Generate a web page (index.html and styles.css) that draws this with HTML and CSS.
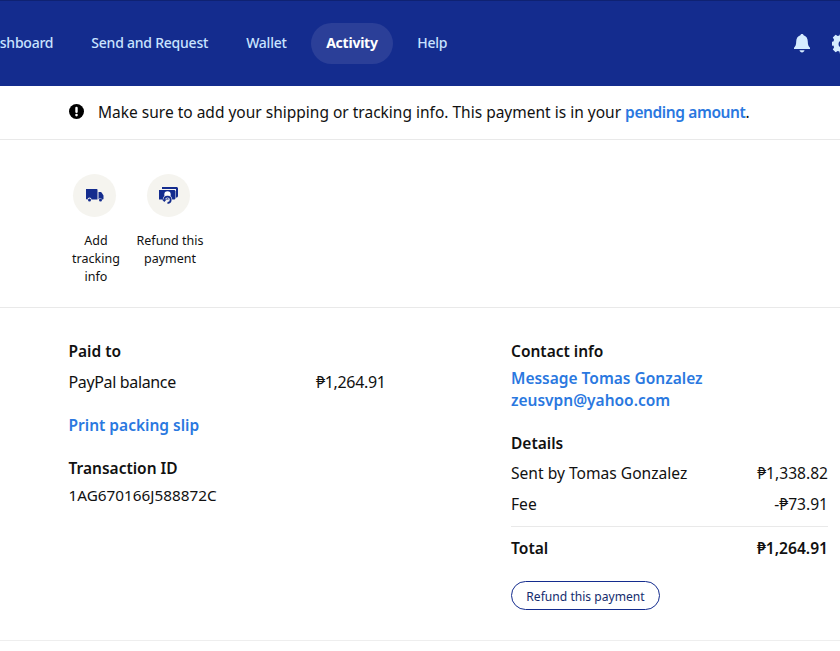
FILE: index.html
```html
<!DOCTYPE html>
<html lang="en">
<head>
    <meta charset="UTF-8">
    <meta name="viewport" content="width=device-width, initial-scale=1.0">
    <title>Transaction details</title>
    <link rel="stylesheet" href="styles.css">
</head>
<body>
<header class="topbar">
    <nav class="nav-links">
        <a class="nav-link" href="#">Dashboard</a>
        <a class="nav-link" href="#">Send and Request</a>
        <a class="nav-link" href="#">Wallet</a>
        <a class="nav-link active" href="#">Activity</a>
        <a class="nav-link" href="#">Help</a>
    </nav>
    <div class="nav-icons">
        <svg class="bell" viewBox="0 0 16 19" width="16" height="19">
            <path fill="#d6ecff" d="M8 0c.8 0 1.400.5 1.600 1.200C12.400 2 13.800 4.500 13.800 7.500c0 3 .6 4.800 2.200 6.300v1.200H0v-1.200c1.600-1.500 2.200-3.300 2.200-6.300 0-3 1.400-5.500 4.200-6.300C6.600.5 7.200 0 8 0z"/>
            <path fill="#d6ecff" d="M5.500 16.300h5C10.200 17.600 9.200 18.400 8 18.400s-2.200-.8-2.500-2.100z"/>
        </svg>
        <svg class="gear" viewBox="0 0 20 20" width="20" height="20">
            <path fill="#d6ecff" fill-rule="evenodd" d="M8 0h4l.6 2.400 1.700.7 2.100-1.300 2.800 2.800-1.300 2.100.7 1.700 2.400.6v4l-2.400.6-.7 1.700 1.300 2.100-2.800 2.800-2.100-1.300-1.700.7L12 20H8l-.6-2.400-1.700-.7-2.100 1.300-2.800-2.800 1.300-2.100-.7-1.700L-1 12V8l2.400-.6.7-1.700L.8 3.600l2.800-2.800 2.100 1.300 1.700-.7zM10 6.500a3.500 3.500 0 1 0 0 7 3.500 3.500 0 0 0 0-7z"/>
        </svg>
    </div>
</header>

<section class="notice">
    <svg class="notice-icon" viewBox="0 0 16 16" width="15" height="15">
        <circle cx="8" cy="8" r="8" fill="#000"/>
        <rect x="6.700" y="3" width="2.600" height="6.600" rx="1.300" fill="#fff"/>
        <circle cx="8" cy="11.800" r="1.400" fill="#fff"/>
    </svg>
    <p>Make sure to add your shipping or tracking info. This payment is in your <a href="#">pending amount</a>.</p>
</section>

<section class="actions">
    <a class="action action-track" href="#">
        <span class="action-circle">
            <svg viewBox="0.5 0.500 18 14" width="18" height="14">
                <path fill="#142c8e" d="M0 1.500C0 .7.700 0 1.500 0h9C11.300 0 12 .7 12 1.500V11H6a2 2 0 0 0-4 0H1.500C.7 11 0 10.300 0 9.500z"/>
                <path fill="#142c8e" d="M13 3.500h2.200c.4 0 .7.200.9.500L18 7v3.200c0 .5-.3.8-.8.8h-.7a2 2 0 0 0-3.500-.3z"/>
                <circle cx="4" cy="11.500" r="1.500" fill="#142c8e"/>
                <circle cx="15" cy="11.500" r="1.500" fill="#142c8e"/>
            </svg>
        </span>
        <span class="action-label">Add tracking info</span>
    </a>
    <a class="action action-refund" href="#">
        <span class="action-circle">
            <svg viewBox="1 -1 20 19" width="20" height="19">
                <path fill="#142c8e" d="M4 0h14.500c.8 0 1.500.7 1.500 1.500V9c0 .8-.7 1.500-1.500 1.500H18V2H4z"/>
                <path fill="#142c8e" d="M1.500 3h14.500c.8 0 1.500.7 1.500 1.500V11c0 .8-.7 1.500-1.500 1.500H1.500C.7 12.500 0 11.800 0 11V4.500C0 3.700.7 3 1.500 3z"/>
                <circle cx="9.500" cy="7.500" r="3.200" fill="#fff"/>
                <path fill="none" stroke="#f5f4ef" stroke-width="3.500" d="M9.500 15.500a3 3 0 1 0-3-3"/>
                <path fill="none" stroke="#142c8e" stroke-width="1.800" d="M9.500 16a3.200 3.200 0 1 0-3.200-3.200"/>
                <path fill="#142c8e" d="M4 12.500h4.600l-2.300 2.600z"/>
            </svg>
        </span>
        <span class="action-label">Refund this payment</span>
    </a>
</section>

<section class="details">
    <div class="col-left">
        <h3>Paid to</h3>
        <div class="row row-paid">
            <span>PayPal balance</span>
            <span>₱1,264.91</span>
        </div>
        <a class="link print-link" href="#">Print packing slip</a>
        <h3 class="txn-title">Transaction ID</h3>
        <p class="txn-id">1AG670166J588872C</p>
    </div>
    <div class="col-right">
        <h3>Contact info</h3>
        <a class="link contact-link" href="#">Message Tomas Gonzalez</a>
        <a class="link contact-link" href="#">zeusvpn@yahoo.com</a>
        <h3 class="details-title">Details</h3>
        <div class="row row-sent">
            <span>Sent by Tomas Gonzalez</span>
            <span>₱1,338.82</span>
        </div>
        <div class="row row-fee">
            <span>Fee</span>
            <span>-₱73.91</span>
        </div>
        <div class="row row-total">
            <span>Total</span>
            <span>₱1,264.91</span>
        </div>
        <button class="refund-btn">Refund this payment</button>
    </div>
</section>
</body>
</html>
```

FILE: styles.css
```css
* {
    box-sizing: border-box;
}

body {
    margin: 0;
    height: 651px;
    overflow: hidden;
    font-family: "Noto Sans", "Open Sans", Arial, sans-serif;
    font-size: 16px;
    color: #111;
    background-color: #fff;
}

a {
    text-decoration: none;
}

h3 {
    margin: 0;
    font-size: 15.5px;
    font-weight: 600;
    line-height: 22px;
}

p {
    margin: 0;
}

.topbar {
    height: 86px;
    display: flex;
    align-items: center;
    justify-content: space-between;
    background-color: #142c8e;
    border-top: 1px solid #0f2272;
    overflow: hidden;
}

.nav-links {
    display: flex;
    align-items: center;
    margin-left: -33px;
}

.nav-link {
    padding: 0 15px;
    margin-right: 8px;
    height: 41px;
    line-height: 39px;
    border-radius: 21px;
    font-size: 14px;
    font-weight: 500;
    letter-spacing: -0.23px;
    color: #c9e3ff;
}

.nav-link.active {
    margin: 0 9px 0 1px;
    padding: 0 15.5px;
    background-color: #2b3f98;
    color: #fff;
    font-weight: 700;
}

.nav-icons {
    display: flex;
    align-items: center;
    gap: 22px;
    margin-right: -12px;
}

.notice {
    height: 54px;
    display: flex;
    align-items: center;
    padding-left: 69px;
    border-bottom: 1px solid #e9e9e9;
    font-size: 15.5px;
}

.notice p {
    margin-bottom: 1px;
}

.notice-icon {
    margin-right: 14px;
    margin-top: -2px;
}

.notice a {
    color: #2a78e0;
    font-weight: 600;
    letter-spacing: -0.4px;
}

.actions {
    height: 168px;
    display: flex;
    padding: 34px 0 0 68px;
    border-bottom: 1px solid #e9e9e9;
}

.action {
    display: flex;
    flex-direction: column;
    align-items: center;
    color: #111;
    text-align: center;
}

.action-track {
    width: 56px;
}

.action-refund {
    width: 72px;
    margin-left: 10px;
}

.action-circle {
    width: 43px;
    height: 43px;
    margin-right: 3px;
    border-radius: 50%;
    display: flex;
    align-items: center;
    justify-content: center;
    background-color: #f5f4ef;
}

.action-label {
    margin-top: 15px;
    font-size: 12.5px;
    line-height: 18px;
}

.details {
    height: 333px;
    display: flex;
    padding: 32px 12px 0 68.5px;
    border-bottom: 1px solid #eee;
}

.col-left {
    width: 317px;
}

.col-right {
    width: 317px;
    margin-left: 125.5px;
}

.row {
    display: flex;
    justify-content: space-between;
    font-size: 15.6px;
    line-height: 22px;
}

.row-paid {
    margin-top: 9px;
    font-size: 16px;
    letter-spacing: -0.35px;
}

.link {
    display: block;
    color: #2a78e0;
    font-size: 15.5px;
    font-weight: 600;
    line-height: 22px;
}

.print-link {
    margin-top: 21px;
}

.txn-title {
    margin-top: 21px;
}

.txn-id {
    margin-top: 5px;
    font-size: 15.3px;
    line-height: 22px;
}

.contact-link {
    margin-top: 0;
}

.col-right h3 + .contact-link {
    margin-top: 5px;
}

.details-title {
    margin-top: 21px;
}

.row-sent {
    margin-top: 8px;
}

.row-fee {
    margin-top: 9px;
    padding-bottom: 11px;
    border-bottom: 1px solid #e9e9e9;
}

.row-total {
    margin-top: 10px;
    font-weight: 600;
}

.refund-btn {
    display: block;
    margin-top: 22px;
    width: 149px;
    height: 29px;
    padding: 1px 0 0;
    background-color: #fff;
    border: 1px solid #142c8e;
    border-radius: 15px;
    color: #142c6e;
    font-family: inherit;
    font-size: 12.1px;
}
```
